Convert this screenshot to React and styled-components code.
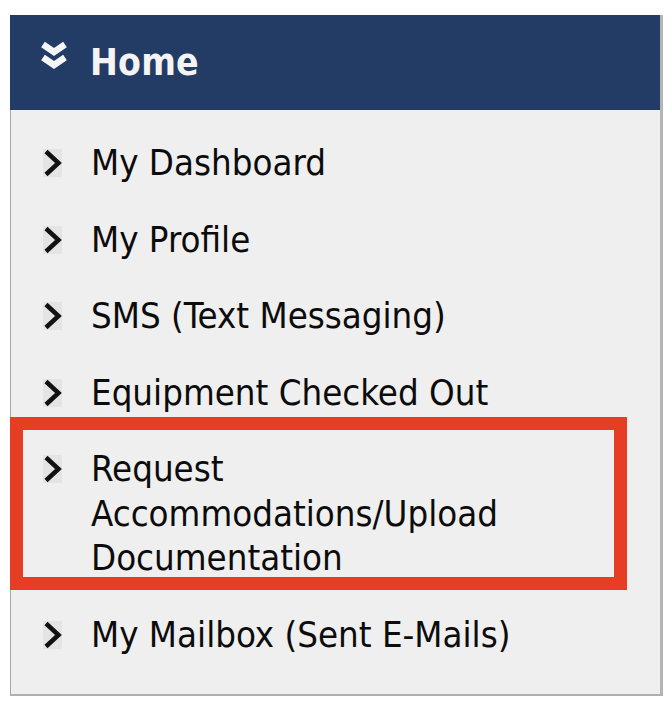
import React from "react";
import styled, { createGlobalStyle } from "styled-components";

const GlobalStyle = createGlobalStyle`
  body {
    margin: 0;
    background: #ffffff;
    font-family: "DejaVu Sans Condensed", "Liberation Sans", sans-serif;
  }
`;

const Panel = styled.div`
  margin: 15px 0 0 10px;
  width: 653px;
  height: 681px;
  box-sizing: border-box;
  background: #efefef;
  border-left: 1px solid #a8a8a8;
  border-right: 3px solid #b4b4b4;
  border-bottom: 2px solid #b0b0b0;
  display: flex;
  flex-direction: column;
`;

const Header = styled.div`
  height: 95px;
  margin-left: -1px;
  background: #233c66;
  display: flex;
  align-items: center;
  padding-left: 30px;
  gap: 22px;
  color: #f4f4f4;

  > svg {
    margin-bottom: 13px;
  }
`;

const Title = styled.h2`
  margin: 0;
  font-size: 37px;
  font-weight: bold;
  letter-spacing: 0.2px;
`;

const Menu = styled.ul`
  list-style: none;
  margin: 0;
  padding: 31px 0 0 0;
  display: flex;
  flex-direction: column;
  gap: 32px;
`;

const Item = styled.li`
  position: relative;
  display: flex;
  align-items: flex-start;
  padding-left: 32px;
  gap: 29px;
  font-size: 36.3px;
  line-height: 44.5px;
  color: #0c0c0c;

  ${(p) =>
    p.$marked &&
    `
    &::after {
      content: "";
      position: absolute;
      left: -1px;
      right: 33px;
      top: -30px;
      bottom: -9px;
      border: 13px solid #e63d25;
    }
  `}
`;

const Arrow = styled.span`
  flex: 0 0 19px;
  height: 44.5px;
  display: flex;
  align-items: center;
  justify-content: center;
`;

const Label = styled.span`
  max-width: 440px;
`;

function Chevron() {
  return (
    <svg width="19" height="28" viewBox="0 0 19 28">
      <rect x="0" y="0" width="19" height="28" fill="#e4e4e4" />
      <polyline
        points="3,2.5 15.5,14 3,25.5"
        fill="none"
        stroke="#111"
        strokeWidth="4.5"
        strokeLinejoin="miter"
      />
    </svg>
  );
}

function DoubleChevron() {
  return (
    <svg width="28" height="30" viewBox="0 0 28 30">
      <g fill="none" stroke="#f6f6f6" strokeWidth="6.5" strokeLinejoin="miter">
        <polyline points="3,3.5 14,11 25,3.5" />
        <polyline points="3,16.5 14,24 25,16.5" />
      </g>
    </svg>
  );
}

const items = [
  "My Dashboard",
  "My Profile",
  "SMS (Text Messaging)",
  "Equipment Checked Out",
  "Request Accommodations/Upload Documentation",
  "My Mailbox (Sent E-Mails)",
];

export default function App() {
  return (
    <>
      <GlobalStyle />
      <Panel>
        <Header>
          <DoubleChevron />
          <Title>Home</Title>
        </Header>
        <Menu>
          {items.map((label, i) => (
            <Item key={label} $marked={i === 4}>
              <Arrow>
                <Chevron />
              </Arrow>
              <Label>{label}</Label>
            </Item>
          ))}
        </Menu>
      </Panel>
    </>
  );
}
